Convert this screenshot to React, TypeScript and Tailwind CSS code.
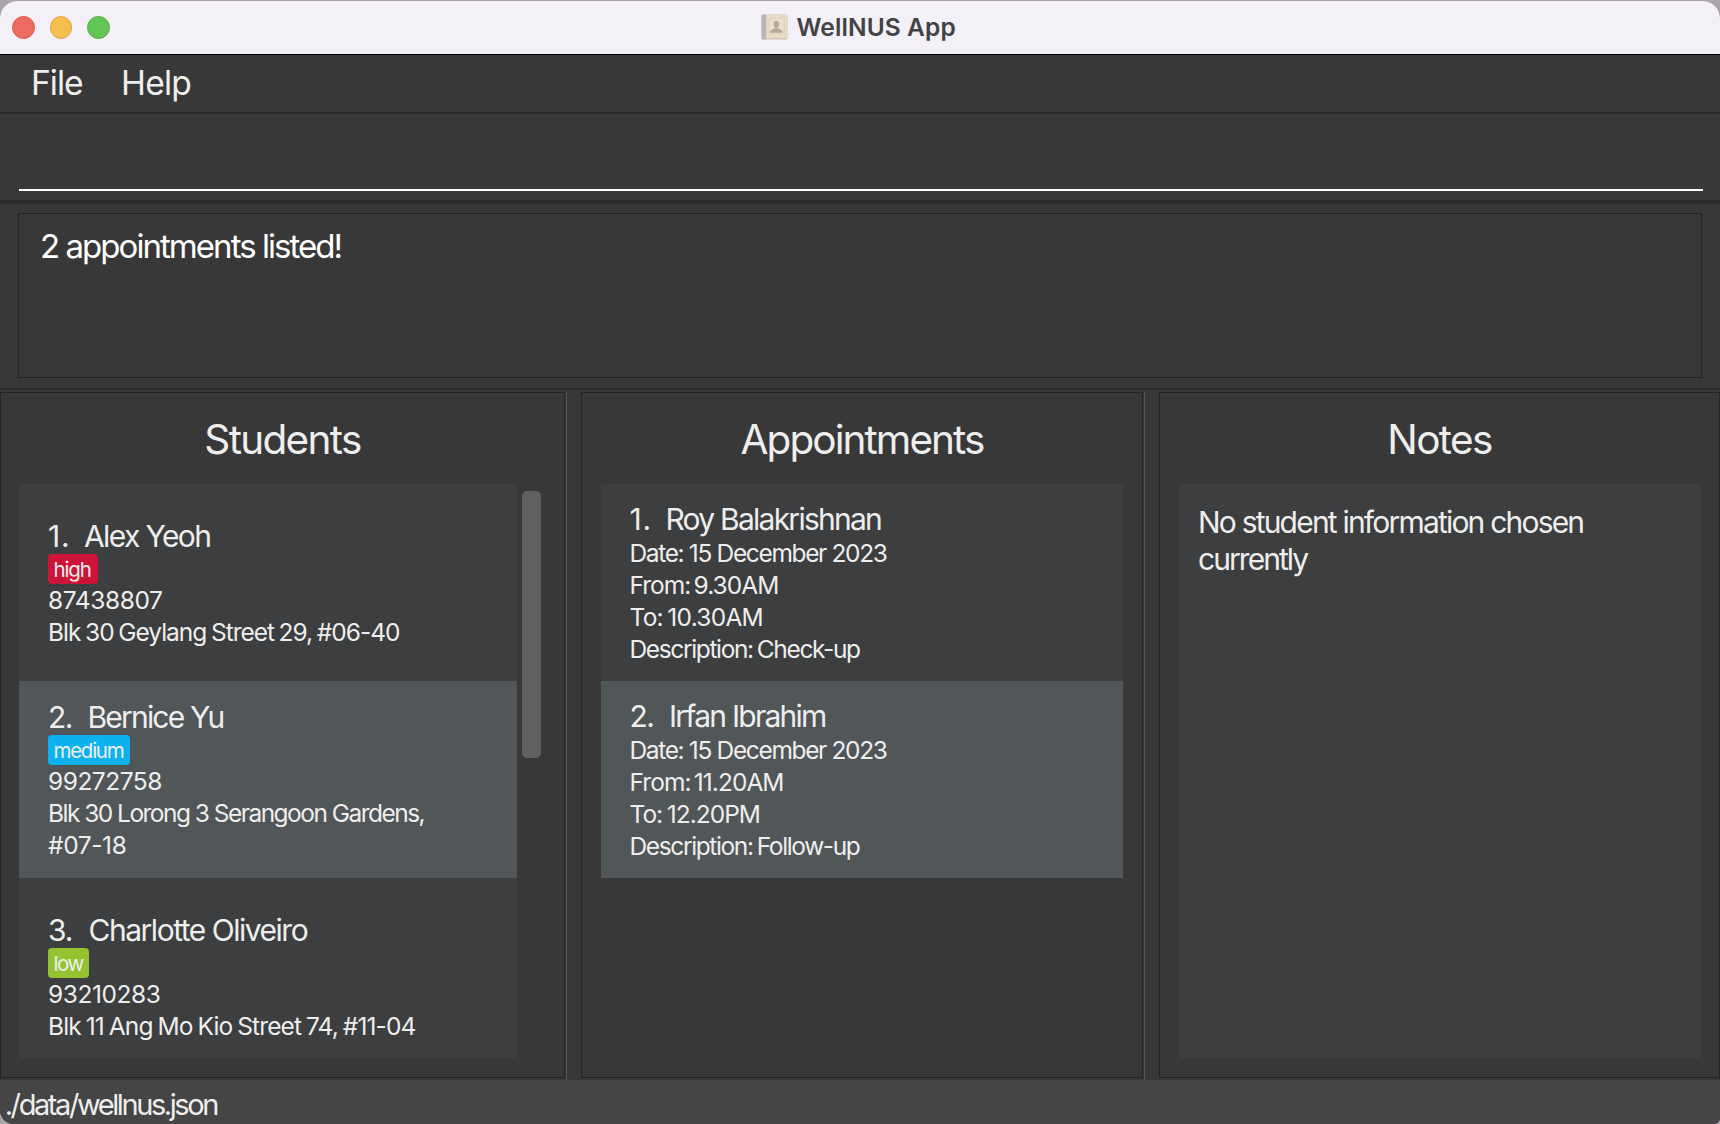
import type { ReactNode } from "react";

type Student = {
  index: string;
  indexTracking: string;
  gap: string;
  name: string;
  nameTracking: string;
  risk: string;
  riskStyle: string;
  phone: string;
  phoneTracking: string;
  address: { text: string; tracking: string }[];
  cell: string;
};

const students: Student[] = [
  {
    index: "1.",
    indexTracking: "tracking-[0.7px]",
    gap: "w-[36px]",
    name: "Alex Yeoh",
    nameTracking: "tracking-[-1.62px]",
    risk: "high",
    riskStyle: "w-[50px] bg-[#cc1438] tracking-[-1.15px]",
    phone: "87438807",
    phoneTracking: "tracking-[-0.4px]",
    address: [
      { text: "Blk 30 Geylang Street 29, #06-40", tracking: "tracking-[-1.02px] [word-spacing:-1.2px]" },
    ],
    cell: "h-[197px] pt-[34px]",
  },
  {
    index: "2.",
    indexTracking: "tracking-[-1.5px]",
    gap: "w-[39.5px]",
    name: "Bernice Yu",
    nameTracking: "tracking-[-1.8px]",
    risk: "medium",
    riskStyle: "w-[82px] bg-[#0cb2ee] tracking-[-1.27px]",
    phone: "99272758",
    phoneTracking: "tracking-[-0.5px]",
    address: [
      { text: "Blk 30 Lorong 3 Serangoon Gardens,", tracking: "tracking-[-1.53px]" },
      { text: "#07-18", tracking: "tracking-[-0.38px]" },
    ],
    cell: "h-[197px] pt-[18px] bg-[#515658]",
  },
  {
    index: "3.",
    indexTracking: "tracking-[-1.06px]",
    gap: "w-[40.5px]",
    name: "Charlotte Oliveiro",
    nameTracking: "tracking-[-1.48px]",
    risk: "low",
    riskStyle: "w-[41px] bg-[#94c230] tracking-[-1.5px]",
    phone: "93210283",
    phoneTracking: "tracking-[-0.42px]",
    address: [
      { text: "Blk 11 Ang Mo Kio Street 74, #11-04", tracking: "tracking-[-0.9px] [word-spacing:-1px]" },
    ],
    cell: "h-[180px] pt-[34px]",
  },
];

const appointments = [
  {
    index: "1.",
    indexTracking: "tracking-[0.7px]",
    gap: "w-[36px]",
    name: "Roy Balakrishnan",
    nameTracking: "tracking-[-1.75px]",
    lines: [
      { text: "Date: 15 December 2023", tracking: "tracking-[-1.35px]" },
      { text: "From: 9.30AM", tracking: "tracking-[-0.98px] [word-spacing:-2.700px]" },
      { text: "To: 10.30AM", tracking: "tracking-[-0.75px] [word-spacing:-1.700px]" },
      { text: "Description: Check-up", tracking: "tracking-[-1.36px] [word-spacing:-1.500px]" },
    ],
    cell: "bg-[#3c3e3f]",
  },
  {
    index: "2.",
    indexTracking: "tracking-[-1.5px]",
    gap: "w-[39.5px]",
    name: "Irfan Ibrahim",
    nameTracking: "tracking-[-1.75px]",
    lines: [
      { text: "Date: 15 December 2023", tracking: "tracking-[-1.35px]" },
      { text: "From: 11.20AM", tracking: "tracking-[-0.95px] [word-spacing:-2.700px]" },
      { text: "To: 12.20PM", tracking: "tracking-[-1px] [word-spacing:-1.200px]" },
      { text: "Description: Follow-up", tracking: "tracking-[-1.37px] [word-spacing:-1.500px]" },
    ],
    cell: "bg-[#515658]",
  },
];

function BookIcon() {
  return (
    <svg width="27" height="26" viewBox="0 0 27 26" className="shrink-0">
      <rect x="0.5" y="0.5" width="26" height="25" rx="1.5" fill="#cfc5b8" />
      <rect x="0.5" y="0.5" width="5" height="25" rx="1.5" fill="#bcb6b9" />
      <rect x="5.5" y="1" width="20.5" height="23" fill="#e8dcc6" />
      <rect x="8.5" y="4.5" width="14.5" height="15.5" fill="#eadfcb" stroke="#dccfb8" strokeWidth="0.8" />
      <path
        d="M15.3 6.8c-1.9 0-2.9 1.4-2.9 3.1 0 1.4.6 2.5 1.5 3.1v1.2c0 .7-5 1.2-5 4.6h12.9c0-3.4-5-3.9-5-4.6V13c.9-.6 1.5-1.7 1.5-3.1 0-1.7-1.1-3.1-3-3.1z"
        fill="#b3a99d"
      />
    </svg>
  );
}

function NameRow({ index, indexTracking, gap, name, nameTracking }: {
  index: string;
  indexTracking: string;
  gap: string;
  name: string;
  nameTracking: string;
}) {
  return (
    <div className="flex h-9 text-[30px] leading-9 whitespace-nowrap">
      <span className={`${gap} ${indexTracking} shrink-0`}>{index}</span>
      <span className={nameTracking}>{name}</span>
    </div>
  );
}

function Panel({ title, tracking, className, children }: {
  title: string;
  tracking: string;
  className: string;
  children: ReactNode;
}) {
  return (
    <section className={`flex h-[686px] shrink-0 flex-col border border-[#242424] pt-[23px] ${className}`}>
      <h2 className={`h-[48px] text-center text-[40.5px] leading-[48px] ${tracking}`}>{title}</h2>
      <div className="mt-5 flex">{children}</div>
    </section>
  );
}

function Divider() {
  return (
    <div className="flex w-4 shrink-0 pl-px">
      <div className="h-[688px] w-px bg-[#555555]" />
    </div>
  );
}

export default function App() {
  return (
    <div className="h-[1124px] w-[1720px] overflow-hidden bg-[#a9a5aa] pt-px font-['Inter',sans-serif] text-[#eeeeee]">
      <div className="flex h-[1123px] flex-col overflow-hidden rounded-t-[17px] rounded-br-[6px] rounded-bl-[14px] bg-[#383838]">
        <header className="flex h-[54px] shrink-0 items-center border-b border-black bg-[#f3f1f7] pl-3">
          <div className="flex w-[749px] gap-[15px]">
            <span className="size-[22.5px] rounded-full border border-[#d85950] bg-[#ed6a5f]" />
            <span className="size-[22.5px] rounded-full border border-[#dba544] bg-[#f5bf4f]" />
            <span className="size-[22.5px] rounded-full border border-[#55ad47] bg-[#62c655]" />
          </div>
          <div className="flex items-center pb-[2px]">
            <BookIcon />
            <h1 className="ml-[8.500px] text-[24.5px] leading-7 font-semibold tracking-[0.1px] text-[#434246]">
              WellNUS App
            </h1>
          </div>
        </header>

        <nav className="flex h-[59px] shrink-0 border-b-2 border-[#2b2b2b] pl-[31px] text-[33.6px] leading-[56px]">
          <span className="w-[90px] tracking-[-1px]">File</span>
          <span className="tracking-[-0.8px]">Help</span>
        </nav>

        <div className="h-[90px] shrink-0 border-b-4 border-[#2b2b2b] pr-[17px] pl-[19px]">
          <div className="h-[77px] border-b-2 border-white" />
        </div>

        <div className="h-[186px] shrink-0 border-b-2 border-[#2b2b2b] px-[18px] pt-[9px]">
          <div className="h-[165px] border border-[#242424] pt-3 pl-[21px] text-[33px] leading-10 tracking-[-1.95px] text-white">
            2 appointments listed!
          </div>
        </div>

        <main className="flex h-[690px] shrink-0 pt-0.5">
          <Panel title="Students" tracking="tracking-[-1.68px]" className="w-[565px]">
            <div className="ml-[18px] h-[574px] w-[498px] overflow-hidden bg-[#3c3e3f]">
              {students.map((s) => (
                <article key={s.index} className={`pl-[29px] ${s.cell}`}>
                  <NameRow {...s} />
                  <div className={`h-[30px] rounded-[4px] pl-[5.500px] text-[20.5px] leading-[32px] ${s.riskStyle}`}>
                    {s.risk}
                  </div>
                  <p className={`text-[24.5px] leading-8 ${s.phoneTracking}`}>{s.phone}</p>
                  {s.address.map((line) => (
                    <p key={line.text} className={`text-[24.5px] leading-8 whitespace-nowrap ${line.tracking}`}>
                      {line.text}
                    </p>
                  ))}
                </article>
              ))}
            </div>
            <div className="mt-[7px] ml-[5px] h-[267px] w-[19px] rounded-[5px] bg-[#606060]" />
          </Panel>
          <Divider />
          <Panel title="Appointments" tracking="tracking-[-1.92px]" className="w-[562px]">
            <div className="ml-[19px] w-[522px]">
              {appointments.map((a) => (
                <article key={a.name} className={`h-[197px] pt-[17px] pl-[28.500px] ${a.cell}`}>
                  <NameRow {...a} />
                  {a.lines.map((line) => (
                    <p key={line.text} className={`text-[24.5px] leading-8 whitespace-nowrap ${line.tracking}`}>
                      {line.text}
                    </p>
                  ))}
                </article>
              ))}
            </div>
          </Panel>
          <Divider />
          <Panel title="Notes" tracking="tracking-[-1.67px]" className="w-[561px]">
            <div className="ml-[19px] h-[574px] w-[522px] bg-[#3c3e3f] pt-[20px] pl-[19px] text-[30px] leading-[37px]">
              <p className="tracking-[-1.8px] whitespace-nowrap">No student information chosen</p>
              <p className="tracking-[-1.95px]">currently</p>
            </div>
          </Panel>
        </main>

        <footer className="flex-1 bg-[#454545] pt-1 pl-[4.700px] text-[29px] leading-[41px] tracking-[-2.42px]">
          ./data/wellnus.json
        </footer>
      </div>
    </div>
  );
}
